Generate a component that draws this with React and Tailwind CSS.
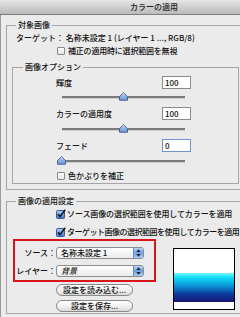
import React from "react";

function Check({ checked }) {
  if (checked) {
    return (
      <svg width="10" height="10" viewBox="0 0 10 10" className="shrink-0">
        <defs>
          <linearGradient id="cbg" x1="0" y1="0" x2="0" y2="1">
            <stop offset="0" stopColor="#b6d3f8" />
            <stop offset="0.5" stopColor="#6fa0e6" />
            <stop offset="1" stopColor="#3d78d6" />
          </linearGradient>
        </defs>
        <rect x="0.5" y="1.5" width="8" height="8" rx="1" fill="url(#cbg)" stroke="#3b5a90" />
        <path d="M2 5.3 L4 7.6 L9.2 0.8" fill="none" stroke="#111" strokeWidth="1.5" />
      </svg>
    );
  }
  return (
    <span className="w-[8px] h-[8px] shrink-0 border border-[#8a8a8a] rounded-[1px] bg-gradient-to-b from-white to-[#e4e4e4]" />
  );
}

function Slider({ thumb }) {
  return (
    <div className="relative ml-[49px] w-[123px] h-[10px] flex items-center">
      <div className="w-full h-[3px] bg-[#7a7a7a] border-b border-[#cfcfcf]" />
      <svg
        className={`absolute top-0 ${thumb}`}
        width="9"
        height="9"
        viewBox="0 0 9 9"
      >
        <defs>
          <linearGradient id="thg" x1="0" y1="0" x2="0" y2="1">
            <stop offset="0" stopColor="#dfeafb" />
            <stop offset="0.5" stopColor="#8fb2e8" />
            <stop offset="1" stopColor="#6f98dc" />
          </linearGradient>
        </defs>
        <path d="M0.5 8.2 V4.6 L4.5 0.7 L8.5 4.6 V8.2 Z" fill="url(#thg)" stroke="#4a5f8c" />
      </svg>
    </div>
  );
}

function Row({ label, value, focus }) {
  return (
    <div className="flex items-center h-[13px] pl-[43px]">
      <span className="flex-1 leading-[10px]">{label}</span>
      <div
        className={`w-[29px] h-[13px] mr-[47px] bg-white border pl-[2px] leading-[11px] ${
          focus ? "border-[#6e93cf]" : "border-[#8a8a8a]"
        }`}
      >
        {value}
      </div>
    </div>
  );
}

function Popup({ children, italic }) {
  return (
    <div className="w-[88px] h-[12px] flex border border-[#8d8d8d] rounded-[3px] overflow-hidden bg-gradient-to-b from-white to-[#ebebeb]">
      <span className={`flex-1 pl-[4px] leading-[10px] ${italic ? "italic" : ""}`}>{children}</span>
      <span className="w-[10px] flex items-center justify-center border-l border-[#6b8cc2] bg-gradient-to-b from-[#b9d5f8] via-[#6a9fe6] to-[#a9cdf6]">
        <svg width="5" height="8" viewBox="0 0 5 8">
          <path d="M2.5 0.3 L4.6 3 H0.4 Z" fill="#1b1b1b" />
          <path d="M0.4 5 H4.6 L2.5 7.7 Z" fill="#1b1b1b" />
        </svg>
      </span>
    </div>
  );
}

function Btn({ children }) {
  return (
    <div className="ml-[49px] w-[77px] h-[12px] rounded-full border border-[#8a8a8a] bg-gradient-to-b from-white via-[#f2f2f2] to-[#d9d9d9] flex items-center justify-center leading-[10px]">
      {children}
    </div>
  );
}

export default function App() {
  return (
    <div className="w-[240px] h-[317px] overflow-hidden bg-[#ebebeb] text-[8px] font-medium text-[#111] font-['Noto_Sans_CJK_JP',sans-serif] flex flex-col">
      <div className="h-[15px] shrink-0 bg-gradient-to-b from-[#e6e6e6] to-[#bababa] border-b border-[#7e7e7e] pl-[130px] leading-[14px] text-[#222]">
        カラーの適用
      </div>
      <div className="flex-1 border-l border-[#9a9a9a] flex flex-col">
        <fieldset className="ml-[5px] mt-[5px] w-[250px] border border-[#a6a6a6] pb-[5px]">
          <legend className="ml-[9px] px-[2px] leading-[10px]">対象画像</legend>
          <div className="mt-[3px] pl-[9px] h-[10px] leading-[10px] whitespace-nowrap">
            ターゲット： 名称未設定 1 (レイヤー 1 ..., RGB/8)
          </div>
          <div className="mt-[3px] ml-[50px] h-[10px] flex items-center gap-[3px] leading-[10px]">
            <Check />
            <span className="tracking-[-0.2px]">補正の適用時に選択範囲を無視</span>
          </div>
          <fieldset className="ml-[5px] mt-[6px] w-[227px] border border-[#a6a6a6] pb-[2px]">
            <legend className="ml-[10px] px-[2px] leading-[10px]">画像オプション</legend>
            <div className="mt-[4px]">
              <Row label="輝度" value="100" />
            </div>
            <div className="mt-[3px]">
              <Slider thumb="left-[57px]" />
            </div>
            <div className="mt-[5px]">
              <Row label="カラーの適用度" value="100" />
            </div>
            <div className="mt-[4px]">
              <Slider thumb="left-[57px]" />
            </div>
            <div className="mt-[5px]">
              <Row label="フェード" value="0" focus />
            </div>
            <div className="mt-[4px]">
              <Slider thumb="-left-[5px]" />
            </div>
            <div className="mt-[5px] ml-[44px] h-[10px] flex items-center gap-[3px] leading-[10px]">
              <Check />
              <span>色かぶりを補正</span>
            </div>
          </fieldset>
        </fieldset>

        <fieldset className="ml-[5px] mt-[6px] w-[250px] border border-[#a6a6a6] pb-[1px]">
          <legend className="ml-[9px] px-[2px] leading-[10px]">画像の適用設定</legend>
          <div className="mt-[3px] ml-[49px] h-[10px] flex items-center gap-[1px] leading-[10px] whitespace-nowrap">
            <Check checked />
            <span className="tracking-[-0.1px]">ソース画像の選択範囲を使用してカラーを適用</span>
          </div>
          <div className="mt-[8px] ml-[49px] h-[10px] flex items-center gap-[1px] leading-[10px] whitespace-nowrap">
            <Check checked />
            <span className="tracking-[-0.5px]">ターゲット画像の選択範囲を使用してカラーを適用</span>
          </div>
          <div className="mt-[2px] flex">
            <div className="flex flex-col">
              <div className="ml-[6px] w-[143px] border-2 border-[#d8141c] pt-[6px] pb-[3px] flex flex-col gap-[6px]">
                <div className="flex items-center">
                  <span className="w-[41px] text-right leading-[10px]">ソース：</span>
                  <Popup>名称未設定 1</Popup>
                </div>
                <div className="flex items-center">
                  <span className="w-[41px] text-right leading-[10px] whitespace-nowrap">レイヤー：</span>
                  <Popup italic>背景</Popup>
                </div>
              </div>
              <div className="mt-[2px]">
                <Btn>設定を読み込む...</Btn>
              </div>
              <div className="mt-[4px]">
                <Btn>設定を保存...</Btn>
              </div>
            </div>
            <div className="ml-[17px] mt-[9px] w-[62px] h-[62px] border border-black bg-white flex flex-col">
              <div className="h-[24px]" />
              <div className="h-[29px] bg-[linear-gradient(to_bottom,#7ff6ff_0%,#10e0fa_14%,#0a9ad8_42%,#0b3c9e_72%,#161672_100%)]" />
            </div>
          </div>
        </fieldset>
      </div>
    </div>
  );
}
